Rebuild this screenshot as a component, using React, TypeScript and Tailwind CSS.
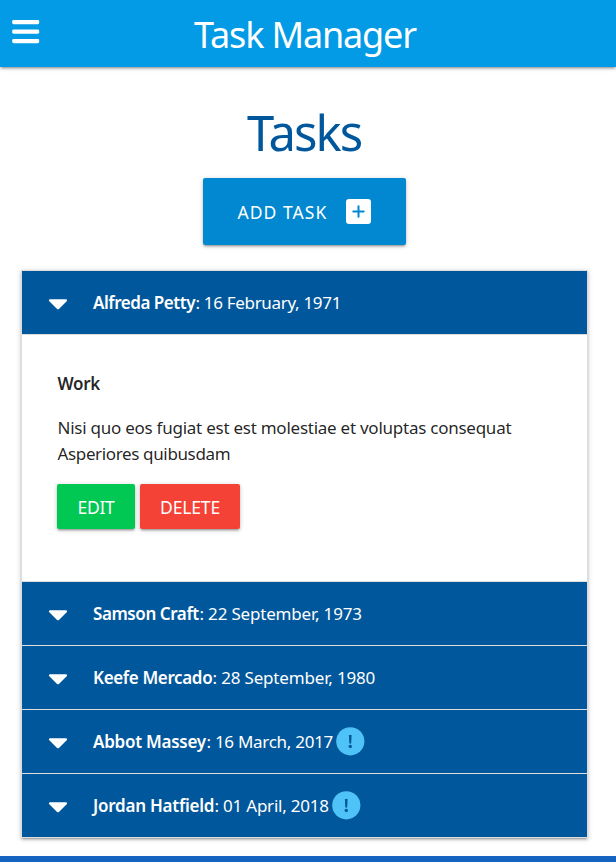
import React from "react";

type Task = { name: string; date: string; nameClass: string; dateClass: string; urgent?: boolean };

const alfreda: Task = { name: "Alfreda Petty", date: ": 16 February, 1971", nameClass: "w-[102.5px] tracking-[-0.46px]", dateClass: "w-[147.5px] tracking-[-0.32px]" };
const tasks: Task[] = [
  { name: "Samson Craft", date: ": 22 September, 1973", nameClass: "w-[106.5px] tracking-[-0.42px]", dateClass: "w-[163.5px] tracking-[-0.19px]" },
  { name: "Keefe Mercado", date: ": 28 September, 1980", nameClass: "w-[119.5px] tracking-[-0.36px]", dateClass: "w-[164.5px] tracking-[-0.17px]" },
  { name: "Abbot Massey", date: ": 16 March, 2017", nameClass: "w-[113.5px] tracking-[-0.26px]", dateClass: "w-[127.5px] tracking-[-0.28px]", urgent: true },
  { name: "Jordan Hatfield", date: ": 01 April, 2018", nameClass: "w-[121.5px] tracking-[-0.24px]", dateClass: "w-[115.5px] tracking-[-0.22px]", urgent: true },
];

function Header({ task }: { task: Task }) {
  return (
    <div className="flex h-16 items-center border-b border-[#ddd] bg-[#01579b] pl-[26px] text-white">
      <svg className="mt-[3px] h-3 w-5 shrink-0" viewBox="0 0 20 12">
        <path d="M2 1.3H18C19 1.3 19.5 2.5 18.7 3.3L11.2 10.8Q10 11.9 8.8 10.8L1.3 3.3C.5 2.5 1 1.3 2 1.3Z" fill="currentColor" />
      </svg>
      <span className={`ml-[25px] shrink-0 font-semibold ${task.nameClass}`}>{task.name}</span>
      <span className={`shrink-0 ${task.dateClass}`}>{task.date}</span>
      {task.urgent && (
        <svg className="ml-[2px] h-[29px] w-[29px] shrink-0" viewBox="0 0 29 29">
          <circle cx="14.3" cy="14.3" r="14.1" fill="#4fc3f7" />
          <path d="M12.9 8h2.7l-.4 8.5h-1.9Z" fill="#01579b" />
          <circle cx="14.3" cy="19.4" r="1.7" fill="#01579b" />
        </svg>
      )}
    </div>
  );
}

export default function App() {
  return (
    <div className="flex h-[862px] w-[616px] flex-col overflow-hidden bg-white font-['Noto_Sans',sans-serif] text-[17px] leading-[26px] whitespace-nowrap text-black/87">
      <nav className="grid h-[67px] shrink-0 grid-cols-[194px_1fr] bg-[#039be5] text-white shadow-[0_2px_2px_0_rgba(0,0,0,0.14),0_3px_1px_-2px_rgba(0,0,0,0.12),0_1px_5px_0_rgba(0,0,0,0.2)]">
        <svg className="mt-5 ml-3 h-6 w-7" viewBox="0 0 28 24">
          <rect x=".2" y="0" width="27" height="4.2" rx="1.4" fill="currentColor" />
          <rect x=".2" y="9.5" width="27" height="4.2" rx="1.4" fill="currentColor" />
          <rect x=".2" y="19" width="27" height="4.2" rx="1.4" fill="currentColor" />
        </svg>
        <span className="text-[36px] leading-[69px] tracking-[-1.15px]">Task Manager</span>
      </nav>
      <main className="flex flex-1 flex-col">
        <h1 className="mt-[36px] ml-[247px] text-[49px] leading-[58px] tracking-[-1.9px] text-[#01579b]">Tasks</h1>
        <button className="mt-[17px] ml-[203px] flex h-[67px] w-[203px] items-center rounded-[2px] bg-[#0288d1] pl-[34.5px] text-white shadow-[0_2px_2px_0_rgba(0,0,0,0.14),0_3px_1px_-2px_rgba(0,0,0,0.12),0_1px_5px_0_rgba(0,0,0,0.2)]">
          <span className="w-[108.5px] text-left text-[17.5px] tracking-[1.05px]">ADD TASK</span>
          <svg className="h-[25px] w-[25px]" viewBox="0 0 25 25">
            <rect width="25" height="25" rx="3" fill="#fff" />
            <path d="M12.5 7.3v10.4M7.3 12.5h10.4" stroke="#0288d1" strokeWidth="2" strokeLinecap="round" />
          </svg>
        </button>
        <section className="mx-[21px] mt-[25px] w-[567px] border border-b-0 border-[#ddd] shadow-[0_2px_2px_0_rgba(0,0,0,0.14),0_3px_1px_-2px_rgba(0,0,0,0.12),0_1px_5px_0_rgba(0,0,0,0.2)]">
          <Header task={alfreda} />
          <div className="h-[247px] border-b border-[#ddd] bg-white pt-[36px] pl-[35px]">
            <h2 className="pl-[0.5px] text-[17px] font-semibold tracking-[-0.3px]">Work</h2>
            <p className="mt-[18px] pl-[0.5px] leading-[26px]">
              <span className="block tracking-[-0.25px]">Nisi quo eos fugiat est est molestiae et voluptas consequat</span>
              <span className="block tracking-[-0.36px]">Asperiores quibusdam</span>
            </p>
            <div className="mt-[17px] flex gap-[5px] text-white">
              <button className="h-[45px] w-[78px] rounded-[2px] bg-[#00c853] text-[17.5px] tracking-[-0.3px] shadow-[0_2px_2px_0_rgba(0,0,0,0.14),0_3px_1px_-2px_rgba(0,0,0,0.12),0_1px_5px_0_rgba(0,0,0,0.2)]">EDIT</button>
              <button className="h-[45px] w-[100px] rounded-[2px] bg-[#f44336] text-[17.5px] tracking-[-0.15px] shadow-[0_2px_2px_0_rgba(0,0,0,0.14),0_3px_1px_-2px_rgba(0,0,0,0.12),0_1px_5px_0_rgba(0,0,0,0.2)]">DELETE</button>
            </div>
          </div>
          {tasks.map((task) => (
            <Header key={task.name} task={task} />
          ))}
        </section>
      </main>
      <footer className="h-[6px] shrink-0 bg-[#1565c0]" />
    </div>
  );
}
